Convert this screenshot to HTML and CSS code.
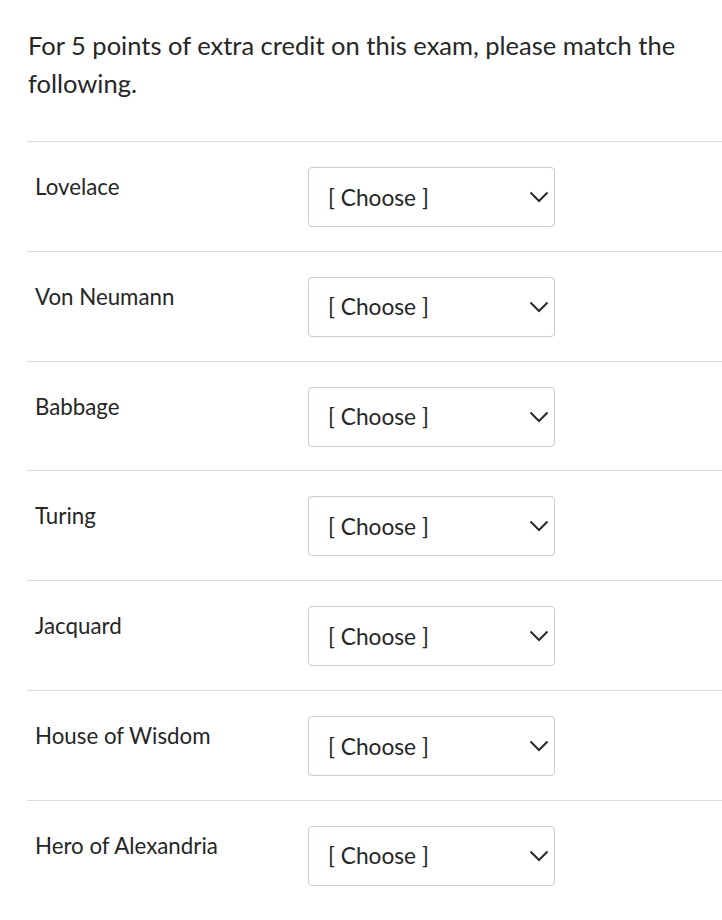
FILE: index.html
```html
<!DOCTYPE html>
<html lang="en">
<head>
<meta charset="utf-8">
<title>Matching question</title>
<link rel="stylesheet" href="styles.css">
</head>
<body>
<div class="question">
  <p class="prompt">For 5 points of extra credit on this exam, please match the following.</p>
  <div class="answers">
    <div class="row"><div class="label">Lovelace</div><div class="select"><span>[ Choose ]</span><svg class="chev" width="20" height="12" viewBox="0 0 20 12"><path d="M1.5 1.5 L10 10 L18.5 1.5" fill="none" stroke="#2a2a2a" stroke-width="2"/></svg></div></div>
    <div class="row"><div class="label">Von Neumann</div><div class="select"><span>[ Choose ]</span><svg class="chev" width="20" height="12" viewBox="0 0 20 12"><path d="M1.5 1.5 L10 10 L18.5 1.5" fill="none" stroke="#2a2a2a" stroke-width="2"/></svg></div></div>
    <div class="row"><div class="label">Babbage</div><div class="select"><span>[ Choose ]</span><svg class="chev" width="20" height="12" viewBox="0 0 20 12"><path d="M1.5 1.5 L10 10 L18.5 1.5" fill="none" stroke="#2a2a2a" stroke-width="2"/></svg></div></div>
    <div class="row"><div class="label">Turing</div><div class="select"><span>[ Choose ]</span><svg class="chev" width="20" height="12" viewBox="0 0 20 12"><path d="M1.5 1.5 L10 10 L18.5 1.5" fill="none" stroke="#2a2a2a" stroke-width="2"/></svg></div></div>
    <div class="row"><div class="label">Jacquard</div><div class="select"><span>[ Choose ]</span><svg class="chev" width="20" height="12" viewBox="0 0 20 12"><path d="M1.5 1.5 L10 10 L18.5 1.5" fill="none" stroke="#2a2a2a" stroke-width="2"/></svg></div></div>
    <div class="row"><div class="label">House of Wisdom</div><div class="select"><span>[ Choose ]</span><svg class="chev" width="20" height="12" viewBox="0 0 20 12"><path d="M1.5 1.5 L10 10 L18.5 1.5" fill="none" stroke="#2a2a2a" stroke-width="2"/></svg></div></div>
    <div class="row"><div class="label">Hero of Alexandria</div><div class="select"><span>[ Choose ]</span><svg class="chev" width="20" height="12" viewBox="0 0 20 12"><path d="M1.5 1.5 L10 10 L18.5 1.5" fill="none" stroke="#2a2a2a" stroke-width="2"/></svg></div></div>
  </div>
</div>
</body>
</html>
```

FILE: styles.css
```css
html, body {
  margin: 0;
  padding: 0;
  background: #ffffff;
}
body {
  font-family: Lato, "Liberation Sans", sans-serif;
  color: #262626;
}
.question {
  padding: 26px 0 0 27px;
}
.prompt {
  margin: 0 0 39px 1px;
  font-size: 25.5px;
  line-height: 38px;
  padding-right: 20px;
}
.answers {
  display: flex;
  flex-direction: column;
}
.row {
  display: flex;
  align-items: flex-start;
  border-top: 1px solid #dcdcdc;
  padding: 25px 0 23.83px 8px;
}
.label {
  width: 273px;
  font-size: 22.3px;
  line-height: 30px;
  padding-top: 5px;
}
.select {
  box-sizing: border-box;
  width: 247px;
  height: 60px;
  border: 1px solid #c7cdd1;
  border-radius: 4px;
  display: flex;
  align-items: center;
  justify-content: space-between;
  padding: 0 5px 0 19px;
  font-size: 22.7px;
}
.chev {
  display: block;
}
```
